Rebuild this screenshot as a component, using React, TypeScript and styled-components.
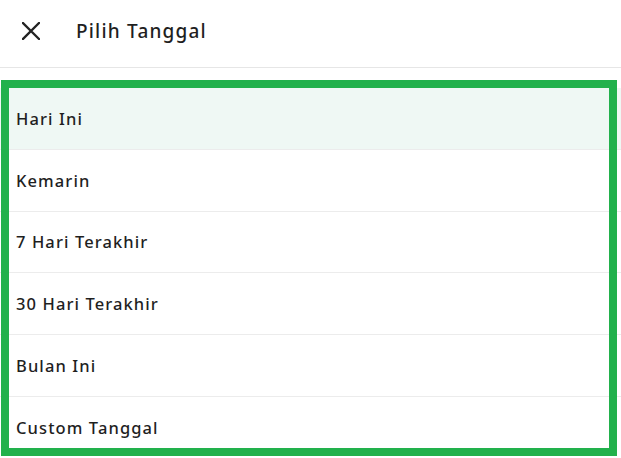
import styled, { createGlobalStyle } from "styled-components";

const GlobalStyle = createGlobalStyle`
  html, body {
    margin: 0;
    padding: 0;
    background: #ffffff;
  }
  body {
    font-family: "Noto Sans", "Open Sans", sans-serif;
    color: #1f1f1f;
    overflow: hidden;
  }
`;

const options = [
  "Hari Ini",
  "Kemarin",
  "7 Hari Terakhir",
  "30 Hari Terakhir",
  "Bulan Ini",
  "Custom Tanggal",
];

function App() {
  const selected = 0;

  return (
    <Page>
      <GlobalStyle />
      <Header>
        <CloseButton aria-label="Tutup">
          <svg width="18" height="18" viewBox="0 0 18 18">
            <path
              d="M1 1 L17 17 M17 1 L1 17"
              stroke="#222"
              strokeWidth="2.3"
              strokeLinecap="square"
            />
          </svg>
        </CloseButton>
        <Title>Pilih Tanggal</Title>
      </Header>
      <ListArea>
        <OptionList>
          {options.map((o, i) => (
            <Option key={o} $active={i === selected}>
              {o}
            </Option>
          ))}
        </OptionList>
        <Highlight />
      </ListArea>
    </Page>
  );
}

export default App;

const Page = styled.div`
  width: 621px;
  height: 458px;
  overflow: hidden;
  background: #ffffff;
`;

const Header = styled.header`
  display: flex;
  align-items: center;
  height: 62px;
  padding-bottom: 5px;
  border-bottom: 1px solid #e6e6e6;
  box-sizing: content-box;
`;

const CloseButton = styled.button`
  display: flex;
  align-items: center;
  justify-content: center;
  width: 18px;
  height: 18px;
  margin-left: 22px;
  padding: 0;
  background: none;
  border: 0;
  cursor: pointer;
`;

const Title = styled.h1`
  margin: 0 0 0 36px;
  font-size: 19px;
  font-weight: 500;
  letter-spacing: 1.2px;
  color: #1f1f1f;
`;

const ListArea = styled.div`
  position: relative;
  padding-top: 20px;
`;

const OptionList = styled.ul`
  margin: 0;
  padding: 0;
  list-style: none;
`;

const Option = styled.li<{ $active?: boolean }>`
  display: flex;
  align-items: center;
  height: 60.75px;
  padding-left: 16px;
  font-size: 16.5px;
  font-weight: 500;
  letter-spacing: 1.1px;
  color: #1f1f1f;
  background: ${(p) => (p.$active ? "#eff8f4" : "#ffffff")};
  border-bottom: 1px solid #ececec;
`;

const Highlight = styled.div`
  position: absolute;
  top: 12px;
  left: 1px;
  width: 600px;
  height: 360px;
  border: 8px solid #22b14c;
  pointer-events: none;
`;
